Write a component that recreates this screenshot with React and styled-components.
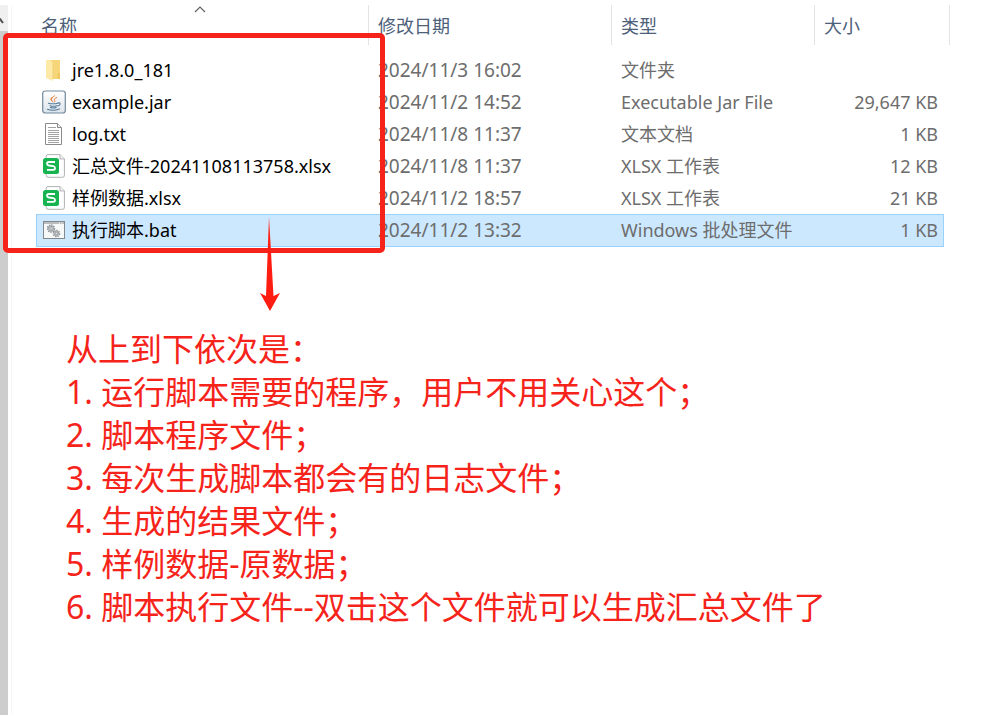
import styled, { createGlobalStyle } from "styled-components";

const GlobalStyle = createGlobalStyle`
  * {
    box-sizing: border-box;
  }

  body {
    margin: 0;
    background: #fff;
    font-family: "Noto Sans", "Noto Sans CJK SC", sans-serif;
    font-size: 18px;
  }
`;

const Page = styled.div`
  position: relative;
  display: flex;
  min-height: 100vh;
  padding-top: 5px;
  overflow: hidden;
`;

const ScrollTrack = styled.div`
  width: 8px;
  flex-shrink: 0;
  background: #cdcdcd;
`;

const ScrollButton = styled.div`
  height: 26px;
  padding-top: 13px;
  background: #f0f0f0;

  svg {
    display: block;
  }
`;

const Content = styled.main`
  flex: 1;
  min-width: 0;
  margin-left: 3px;
  padding: 0 61px 0 24px;
  border-left: 1px solid #f5f5f5;
`;

const FileTable = styled.table`
  width: 100%;
  table-layout: fixed;
  border-collapse: separate;
  border-spacing: 0;
`;

const HeadCell = styled.th`
  position: relative;
  width: ${({ $width }) => $width || "auto"};
  height: 40px;
  padding: 0;
  border-right: ${({ $last }) => ($last ? "0" : "1px solid #e3e3e3")};
  text-align: left;

  &::after {
    content: "";
    display: ${({ $last }) => ($last ? "block" : "none")};
    position: absolute;
    top: 0;
    right: -6px;
    height: 100%;
    border-right: 1px solid #e3e3e3;
  }
`;

const SortButton = styled.button`
  display: block;
  width: 100%;
  padding: 2px 0 0 ${({ $first }) => ($first ? "5px" : "9px")};
  border: 0;
  background: transparent;
  color: #4c607a;
  font: inherit;
  font-weight: 400;
  line-height: 38px;
  text-align: left;
`;

const SortMark = styled.svg`
  position: absolute;
  top: 0;
  left: calc(50% - 8px);
`;

const Spacer = styled.tr`
  height: 9px;
`;

const Row = styled.tr`
  td {
    border: 0 solid #99d1ff;
    border-width: ${({ $selected }) => ($selected ? "1px 0" : "0")};
    padding-bottom: ${({ $selected }) => ($selected ? "2px" : "0")};
    background: ${({ $selected }) => ($selected ? "#cce8ff" : "transparent")};
  }

  td:first-child {
    border-left-width: ${({ $selected }) => ($selected ? "1px" : "0")};
  }

  td:last-child {
    border-right-width: ${({ $selected }) => ($selected ? "1px" : "0")};
    padding-right: ${({ $selected }) => ($selected ? "5px" : "6px")};
  }
`;

const Cell = styled.td`
  height: ${({ $selected }) => ($selected ? "33px" : "32px")};
  padding: 0 6px 0 9px;
  color: #6d6d6d;
  font-size: ${({ $latin }) => ($latin ? "19px" : "18px")};
  line-height: 28px;
  text-align: ${({ $right }) => ($right ? "right" : "left")};
  white-space: nowrap;
`;

const NameCell = styled(Cell)`
  padding: 0 0 0 ${({ $selected }) => ($selected ? "5px" : "6px")};
  color: #000;
`;

const FileName = styled.div`
  display: flex;
  align-items: center;
  gap: 6px;

  svg {
    flex-shrink: 0;
  }
`;

const Notes = styled.section`
  margin: 80px 0 0 30px;
  color: #f5231a;
  font-size: 32px;
  line-height: 43px;

  p {
    margin: 0;
  }
`;

const NoteList = styled.ol`
  margin: 0;
  padding: 0;
  list-style: none;
`;

const HighlightBox = styled.div`
  position: absolute;
  top: 33px;
  left: 3px;
  width: 382px;
  height: 220px;
  border: 5px solid #f5231a;
  border-radius: 5px;
  pointer-events: none;
`;

const Arrow = styled.svg`
  position: absolute;
  top: 216px;
  left: 259px;
  pointer-events: none;
`;

const FolderIcon = () => (
  <svg width="24" height="24" viewBox="0 0 24 24">
    <path d="M8 2h10v19H8z" fill="#f6d678" />
    <path d="M16 15h2v6l-3-1z" fill="#efc65f" />
    <path d="M4 2h4l3 2.500V23l-7-3z" fill="#ffe9a6" />
    <path d="M11 4.500V21" stroke="#eccb70" strokeWidth=".7" />
  </svg>
);

const JarIcon = () => (
  <svg width="24" height="24" viewBox="0 0 24 24">
    <defs>
      <linearGradient id="jar" x1="0" y1="0" x2="0" y2="1">
        <stop offset="0" stopColor="#fff" />
        <stop offset="1" stopColor="#dce4ea" />
      </linearGradient>
    </defs>
    <rect x=".7" y="1" width="22.600" height="22" rx="2.500" fill="url(#jar)" stroke="#71889d" strokeWidth="1.200" />
    <path d="M13 4.500c1 2-3.500 3-3.200 5 .1 1.200 1.600 1.800 1.800 3-3-1.600-4-3.200-2.400-4.900C10.500 6.500 13 6.200 13 4.500z" fill="#e8772e" />
    <path d="M15 7.500c-2 .7-3.300 1.600-2.400 2.800.5.700.2 1.500-.4 2" fill="none" stroke="#e8772e" strokeWidth="1" />
    <path d="M6.500 13.200c2 .8 7 .8 9.300 0M8 15.700c2 .7 5 .7 7 0M8.500 17.500c1.800.6 4 .6 5.600 0M5.500 19.200c3 1.400 9.500 1.300 12-.3M15.600 13c3.500-.8 3.200 2.200.2 3" fill="none" stroke="#527899" strokeWidth="1.100" strokeLinecap="round" />
  </svg>
);

const TextIcon = () => (
  <svg width="24" height="24" viewBox="0 0 24 24">
    <path d="M3.500 1.500h12l4 4v17h-16z" fill="#fff" stroke="#8b8b8b" />
    <path d="M15.500 1.500v4h4" fill="#eee" stroke="#8b8b8b" />
    <path d="M6 5.500h8M6 8.500h11M6 10.500h11M6 12.500h11M6 14.500h11M6 16.500h11M6 18.500h11M6 20.500h11" stroke="#999" strokeWidth=".9" />
  </svg>
);

const SheetIcon = () => (
  <svg width="24" height="24" viewBox="0 0 24 24">
    <path d="M6 .6h12l4.400 4.400v16.500q0 1.800-1.800 1.800H6q-1.800 0-1.800-1.800V2.400Q4.200.6 6 .6z" fill="#fff" stroke="#a4a9a7" strokeWidth=".9" />
    <path d="M18 .8V5h4.200" fill="#f0f0f0" stroke="#a4a9a7" strokeWidth=".8" />
    <rect x="1" y="4" width="16" height="16" rx="2.500" fill="#16b351" />
    <path d="M13 8H6.800q-1.800 0-1.800 1.600 0 1.700 1.800 1.900l4.500.7q1.700.3 1.700 2 0 1.600-1.800 1.600H5" fill="none" stroke="#fff" strokeWidth="1.800" />
  </svg>
);

const Gear = ({ x, y, r }) => (
  <g transform={`translate(${x} ${y})`} fill="none" stroke="#858b8f">
    <circle r={r} strokeWidth="1.800" strokeDasharray="1.300 .9" />
    <circle r={r - 1} fill="#dfe2e4" strokeWidth=".8" />
    <circle r=".9" fill="#fff" strokeWidth=".7" />
  </g>
);

const BatIcon = () => (
  <svg width="24" height="24" viewBox="0 0 24 24">
    <rect x="1.500" y="3.500" width="21" height="17" fill="#f7f8f8" stroke="#85898c" />
    <path d="M2 5h20" stroke="#b9bdc0" strokeWidth="2" />
    <path d="M17 5h1M19.500 5h1" stroke="#fff" />
    <Gear x={9} y={10.500} r={3.300} />
    <Gear x={14.500} y={15.500} r={2.900} />
  </svg>
);

const files = [
  { icon: FolderIcon, name: "jre1.8.0_181", date: "2024/11/3 16:02", type: "文件夹", size: "" },
  { icon: JarIcon, name: "example.jar", date: "2024/11/2 14:52", type: "Executable Jar File", size: "29,647 KB" },
  { icon: TextIcon, name: "log.txt", date: "2024/11/8 11:37", type: "文本文档", size: "1 KB" },
  { icon: SheetIcon, name: "汇总文件-20241108113758.xlsx", date: "2024/11/8 11:37", type: "XLSX 工作表", size: "12 KB" },
  { icon: SheetIcon, name: "样例数据.xlsx", date: "2024/11/2 18:57", type: "XLSX 工作表", size: "21 KB" },
  { icon: BatIcon, name: "执行脚本.bat", date: "2024/11/2 13:32", type: "Windows 批处理文件", size: "1 KB", selected: true },
];

const notes = [
  "1. 运行脚本需要的程序，用户不用关心这个；",
  "2. 脚本程序文件；",
  "3. 每次生成脚本都会有的日志文件；",
  "4. 生成的结果文件；",
  "5. 样例数据-原数据；",
  "6. 脚本执行文件--双击这个文件就可以生成汇总文件了",
];

const App = () => {
  return (
    <Page lang="zh-CN">
      <GlobalStyle />
      <ScrollTrack>
        <ScrollButton>
          <svg width="8" height="8" viewBox="0 0 8 8">
            <path d="M-3 5l3-4 3 4" fill="none" stroke="#505050" strokeWidth="2" />
          </svg>
        </ScrollButton>
      </ScrollTrack>

      <Content>
        <FileTable>
          <thead>
            <tr>
              <HeadCell $width="333px" aria-sort="ascending">
                <SortButton $first>名称</SortButton>
                <SortMark width="12" height="8" viewBox="0 0 12 8">
                  <path d="M1 7l5-5 5 5" fill="none" stroke="#606060" strokeWidth="1.200" />
                </SortMark>
              </HeadCell>
              <HeadCell $width="243px">
                <SortButton>修改日期</SortButton>
              </HeadCell>
              <HeadCell $width="203px">
                <SortButton>类型</SortButton>
              </HeadCell>
              <HeadCell $last>
                <SortButton>大小</SortButton>
              </HeadCell>
            </tr>
          </thead>
          <tbody>
            <Spacer />
            {files.map(({ icon: Icon, name, date, type, size, selected }) => (
              <Row key={name} $selected={selected}>
                <NameCell $selected={selected}>
                  <FileName>
                    <Icon />
                    {name}
                  </FileName>
                </NameCell>
                <Cell $latin>{date}</Cell>
                <Cell>{type}</Cell>
                <Cell $right>{size}</Cell>
              </Row>
            ))}
          </tbody>
        </FileTable>

        <Notes>
          <p>从上到下依次是：</p>
          <NoteList>
            {notes.map((note) => (
              <li key={note}>{note}</li>
            ))}
          </NoteList>
        </Notes>
      </Content>

      <HighlightBox />
      <Arrow width="22" height="96" viewBox="0 0 22 96">
        <path d="M10 1l4.500 79 6.500-3-10 18L1 77l6 3z" fill="#ff1d12" />
      </Arrow>
    </Page>
  );
};

export default App;
